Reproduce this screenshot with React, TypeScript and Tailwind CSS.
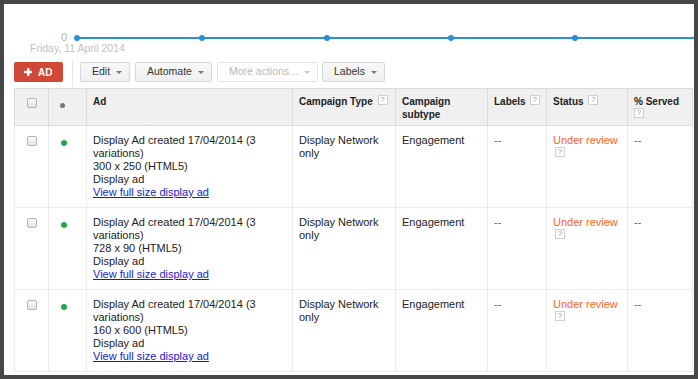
import clsx from "clsx";

const rows = [
  { size: "300 x 250 (HTML5)" },
  { size: "728 x 90 (HTML5)" },
  { size: "160 x 600 (HTML5)" },
];

function Help({ className }: { className?: string }) {
  return (
    <span
      className={clsx(
        "inline-flex h-[10px] w-[10px] items-center justify-center border border-[#cfcfcf] bg-white text-[8px] font-normal leading-none text-[#9a9a9a]",
        className
      )}
    >
      ?
    </span>
  );
}

function Check() {
  return (
    <span className="block h-[10px] w-[10px] rounded-[2px] border border-[#b3b3b3] bg-gradient-to-b from-[#fdfdfd] to-[#e2e2e2]" />
  );
}

function Caret({ light }: { light?: boolean }) {
  return (
    <span
      className={clsx(
        "ml-[6px] h-0 w-0 border-x-[3px] border-t-[3px] border-x-transparent",
        light ? "border-t-[#c8c8c8]" : "border-t-[#777]"
      )}
    />
  );
}

function Btn({ label, className, disabled }: { label: string; className: string; disabled?: boolean }) {
  return (
    <button
      className={clsx(
        "mt-[2px] flex h-[20px] items-center rounded-[2px] border pl-[11px] text-[10.5px]",
        disabled
          ? "border-[#e3e3e3] bg-white text-[#b9b9b9]"
          : "border-[#d7d7d7] bg-gradient-to-b from-[#f8f8f8] to-[#efefef] text-[#333]",
        className
      )}
    >
      {label}
      <Caret light={disabled} />
    </button>
  );
}

function Chart() {
  const dots = [73, 198, 323, 447, 571];
  return (
    <div className="relative h-[56px]">
      <svg className="absolute left-0 top-0" width="690" height="56">
        <line x1="73" y1="34" x2="690" y2="34" stroke="#2b8fd8" strokeWidth="2" />
        {dots.map((x) => (
          <circle key={x} cx={x} cy="34" r="3" fill="#2b8fd8" />
        ))}
      </svg>
      <span className="absolute left-[57px] top-[28px] text-[11px] leading-[10px] text-[#b4b4b4]">0</span>
      <span className="absolute left-[26px] top-[39px] text-[10.5px] leading-[10px] text-[#c2c2c2]">
        Friday, 11 April 2014
      </span>
    </div>
  );
}

export default function App() {
  const th = "border border-[#dadada] bg-[#f0f0f0] px-[6px] pt-[6px] align-top text-left text-[10px] font-bold leading-[13px] text-[#222]";
  const td = "border border-[#ececec] px-[6px] pt-[8px] align-top text-[11px] leading-[13px] text-[#222]";
  return (
    <div className="h-[379px] w-[698px] bg-[#474747] p-[4px] font-['Liberation_Sans',Arial,sans-serif]">
      <div className="h-[371px] w-[690px] overflow-hidden bg-white">
        <Chart />

        <div className="flex h-[28px] items-start pl-[10px]">
          <button className="mt-[2px] flex h-[20px] w-[49px] items-center rounded-[2px] bg-[#d14836] pl-[10px] text-[10px] font-bold text-white">
            <svg width="8" height="8" viewBox="0 0 8 8">
              <rect x="3" y="0" width="2.4" height="8" fill="#fff" />
              <rect x="0" y="2.8" width="8" height="2.4" fill="#fff" />
            </svg>
            <span className="ml-[6px]">AD</span>
          </button>
          <span className="ml-[9px] h-[27px] w-px bg-[#e6e6e6]" />
          <Btn label="Edit" className="ml-[7px] w-[50px]" />
          <Btn label="Automate" className="ml-[5px] w-[77px]" />
          <Btn label="More actions..." className="ml-[5px] w-[101px]" disabled />
          <Btn label="Labels" className="ml-[4px] w-[63px]" />
        </div>

        <table className="ml-[10px] w-[678px] table-fixed border-collapse">
          <colgroup>
            <col className="w-[34px]" />
            <col className="w-[38px]" />
            <col className="w-[206px]" />
            <col className="w-[103px]" />
            <col className="w-[92px]" />
            <col className="w-[59px]" />
            <col className="w-[81px]" />
            <col className="w-[65px]" />
          </colgroup>
          <thead>
            <tr className="h-[37px]">
              <th className={clsx(th, "pl-[12px] pt-[9px]")}>
                <Check />
              </th>
              <th className={clsx(th, "pl-[11px] pt-[14px]")}>
                <span className="block h-[5px] w-[5px] rounded-full bg-[#777]" />
              </th>
              <th className={th}>Ad</th>
              <th className={th}>
                Campaign Type <Help className="ml-[2px] align-top" />
              </th>
              <th className={th}>Campaign subtype</th>
              <th className={clsx(th, "whitespace-nowrap pr-0")}>
                Labels<Help className="ml-[4px] align-top" />
              </th>
              <th className={th}>
                Status <Help className="ml-[2px] align-top" />
              </th>
              <th className={th}>
                % Served <Help className="align-top" />
              </th>
            </tr>
          </thead>
          <tbody>
            {rows.map((r) => (
              <tr key={r.size} className="h-[82px]">
                <td className={clsx(td, "pl-[12px] pt-[10px]")}>
                  <Check />
                </td>
                <td className={clsx(td, "pl-[12px] pt-[14px]")}>
                  <span className="block h-[6px] w-[6px] rounded-full bg-[#25a84c]" />
                </td>
                <td className={td}>
                  <div>Display Ad created 17/04/2014 (3 variations)</div>
                  <div>{r.size}</div>
                  <div>Display ad</div>
                  <a className="text-[#1a1ad2] underline">View full size display ad</a>
                </td>
                <td className={td}>Display Network only</td>
                <td className={td}>Engagement</td>
                <td className={clsx(td, "text-[#666]")}>--</td>
                <td className={td}>
                  <div className="text-[#f8651e]">Under review</div>
                  <div className="flex">
                    <Help className="ml-[2px]" />
                  </div>
                </td>
                <td className={clsx(td, "text-[#666]")}>--</td>
              </tr>
            ))}
          </tbody>
        </table>
      </div>
    </div>
  );
}
